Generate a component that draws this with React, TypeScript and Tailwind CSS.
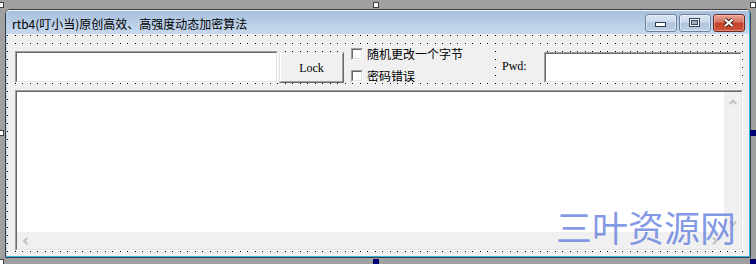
import React from "react";

function Sunken({ className, children }: { className: string; children?: React.ReactNode }) {
  return (
    <div className={`border border-t-[#a0a0a0] border-l-[#a0a0a0] border-b-white border-r-white ${className}`}>
      <div className="w-full h-full border border-t-[#696969] border-l-[#696969] border-b-[#e3e3e3] border-r-[#e3e3e3] bg-white overflow-hidden">
        {children}
      </div>
    </div>
  );
}

function CheckRow({ label }: { label: string }) {
  return (
    <div className="flex items-center gap-[4px] h-[16px]">
      <div className="w-[12px] h-[12px] border border-t-[#a0a0a0] border-l-[#a0a0a0] border-b-white border-r-white">
        <div className="w-full h-full border border-t-[#696969] border-l-[#696969] border-b-[#e3e3e3] border-r-[#e3e3e3] bg-white" />
      </div>
      <span className="text-[12px] leading-[16px] text-black font-['Noto_Sans_CJK_SC',sans-serif]">{label}</span>
    </div>
  );
}

function Chevron({ dir }: { dir: "up" | "down" | "left" | "right" }) {
  const d =
    dir === "up"
      ? "M0.8 6 L4 2.6 L7.2 6"
      : dir === "down"
      ? "M0.8 1.5 L4 4.9 L7.2 1.5"
      : dir === "left"
      ? "M5.5 0.8 L2.1 4 L5.5 7.2"
      : "M1 0.8 L4.4 4 L1 7.2";
  const w = dir === "up" || dir === "down" ? 8 : 7;
  const h = dir === "up" || dir === "down" ? 7 : 8;
  return (
    <svg width={w} height={h} viewBox={`0 0 ${w} ${h}`}>
      <path d={d} stroke="#c2c2c2" strokeWidth="2" fill="none" />
    </svg>
  );
}

export default function App() {
  return (
    <div className="relative w-[756px] h-[264px] bg-[#a0a0a0] overflow-hidden">
      {/* window */}
      <div className="ml-[5px] mt-[9px] w-[746px] h-[249px] flex flex-col border border-[#3a3d42] rounded-t-[5px] bg-[#f0f0f0]">
        <div className="flex flex-col flex-1 border border-t-[#f2f6fb] border-l-[#a9d3f1] border-r-[#38b6e8] border-b-[#38b6e8] rounded-t-[4px] overflow-hidden">
          {/* title bar */}
          <div className="h-[23px] flex items-start justify-between pl-[5px] pr-[4px] bg-[linear-gradient(to_bottom,#a8bfdb,#bcd0e8_60%,#c6d8ed)]">
            <span className="mt-[5px] text-[12px] leading-[16px] text-black whitespace-nowrap font-['Noto_Sans_CJK_SC',sans-serif]">
              rtb4(叮小当)原创高效、高强度动态加密算法
            </span>
            <div className="mt-[3px] flex gap-[2px]">
              <div className="w-[32px] h-[18px] rounded-[3px] border border-[#6e829f] bg-[linear-gradient(to_bottom,#dde7f3,#c8d7ea_45%,#afc4de_50%,#bccfe6)] shadow-[inset_0_0_0_1px_rgba(255,255,255,0.45)]">
                <svg width="30" height="16" viewBox="0 0 30 16">
                  <rect x="9.5" y="7.5" width="10" height="4" fill="#ffffff" stroke="#2f3a4e" />
                </svg>
              </div>
              <div className="w-[32px] h-[18px] rounded-[3px] border border-[#6e829f] bg-[linear-gradient(to_bottom,#dde7f3,#c8d7ea_45%,#afc4de_50%,#bccfe6)] shadow-[inset_0_0_0_1px_rgba(255,255,255,0.45)]">
                <svg width="30" height="16" viewBox="0 0 30 16">
                  <rect x="9.5" y="3.5" width="10" height="8" fill="#f3f6fa" stroke="#3a465c" />
                  <rect x="11.5" y="5.5" width="6" height="4" fill="#9fadc2" stroke="#3a465c" />
                </svg>
              </div>
              <div className="w-[32px] h-[18px] rounded-[3px] border border-[#6e2a20] bg-[linear-gradient(to_bottom,#e9a497,#d6735f_45%,#c43f2a_50%,#d0573d)] shadow-[inset_0_0_0_1px_rgba(255,255,255,0.3)]">
                <svg width="30" height="16" viewBox="0 0 30 16">
                  <path d="M11 4.5 L18.5 11 M18.5 4.5 L11 11" stroke="#3d1a14" strokeWidth="4.2" fill="none" />
                  <path d="M11 4.5 L18.5 11 M18.5 4.5 L11 11" stroke="#ffffff" strokeWidth="2.2" fill="none" />
                </svg>
              </div>
            </div>
          </div>

          {/* client area */}
          <div className="flex-1 flex flex-col pl-[8px] bg-[#f0f0f0] [background-image:radial-gradient(circle_at_0.5px_1.5px,#000_0.6px,transparent_0.7px),radial-gradient(circle_at_8.5px_1.5px,#000_0.6px,transparent_0.7px)] [background-size:15px_8px]">
            {/* row 1 */}
            <div className="mt-[17px] h-[32px] flex items-start">
              <Sunken className="w-[263px] h-[32px]" />
              <div className="ml-[1px] mt-[1px] w-[65px] h-[31px] border border-t-[#e3e3e3] border-l-[#e3e3e3] border-b-[#696969] border-r-[#696969]">
                <div className="w-full h-full border border-t-white border-l-white border-b-[#a0a0a0] border-r-[#a0a0a0] bg-[#f0f0f0] flex items-center justify-center">
                  <span className="text-[12px] leading-[14px] text-black font-['Liberation_Serif',serif]">Lock</span>
                </div>
              </div>
              <div className="ml-[1px] mt-[-7px] w-[150px] h-[39px] bg-[#f0f0f0] flex flex-col pl-[6px]">
                <div className="mt-[2px]">
                  <CheckRow label="随机更改一个字节" />
                </div>
                <div className="mt-[6px]">
                  <CheckRow label="密码错误" />
                </div>
              </div>
              <div className="ml-[2px] mt-[-1px] w-[47px] h-[32px] bg-[#f0f0f0] flex items-center pl-[5px]">
                <span className="text-[12px] leading-[14px] text-black font-['Liberation_Serif',serif]">Pwd:</span>
              </div>
              <Sunken className="w-[198px] h-[31px] mt-[1px]" />
            </div>

            {/* rich text box */}
            <Sunken className="mt-[7px] w-[728px] h-[161px]">
              <div className="w-full h-full flex flex-col">
                <div className="flex-1 flex">
                  <div className="flex-1 bg-white" />
                  <div className="w-[17px] bg-[#f0f0f0] flex flex-col justify-between">
                    <div className="h-[17px] pt-[2px] flex items-center justify-center">
                      <Chevron dir="up" />
                    </div>
                    <div className="h-[17px] flex items-center justify-center">
                      <Chevron dir="down" />
                    </div>
                  </div>
                </div>
                <div className="h-[17px] flex bg-[#f0f0f0]">
                  <div className="flex-1 flex justify-between">
                    <div className="w-[17px] flex items-center justify-center">
                      <Chevron dir="left" />
                    </div>
                    <div className="w-[17px] flex items-center justify-center">
                      <Chevron dir="right" />
                    </div>
                  </div>
                  <div className="w-[17px] bg-[#f0f0f0]" />
                </div>
              </div>
            </Sunken>
          </div>
        </div>
      </div>

      {/* watermark */}
      <div className="absolute left-[556px] top-[208px] text-[36px] leading-[36px] whitespace-nowrap text-[rgba(85,115,220,0.72)] font-['Noto_Sans_CJK_SC',sans-serif]">
        三叶资源网
      </div>

      {/* selection handles */}
      <div className="absolute left-[-2px] top-[2px] w-[6px] h-[6px] bg-white border border-[#404040]" />
      <div className="absolute left-[373px] top-[2px] w-[6px] h-[6px] bg-white border border-[#404040]" />
      <div className="absolute left-[750px] top-[2px] w-[6px] h-[6px] bg-white border border-[#404040]" />
      <div className="absolute left-[-2px] top-[130px] w-[6px] h-[6px] bg-white border border-[#404040]" />
      <div className="absolute left-[750px] top-[130px] w-[6px] h-[6px] bg-[#000080] border border-[#000060]" />
      <div className="absolute left-[-2px] top-[259px] w-[6px] h-[6px] bg-white border border-[#404040]" />
      <div className="absolute left-[373px] top-[259px] w-[6px] h-[6px] bg-[#000080] border border-[#000060]" />
      <div className="absolute left-[750px] top-[259px] w-[6px] h-[6px] bg-[#000080] border border-[#000060]" />
    </div>
  );
}
